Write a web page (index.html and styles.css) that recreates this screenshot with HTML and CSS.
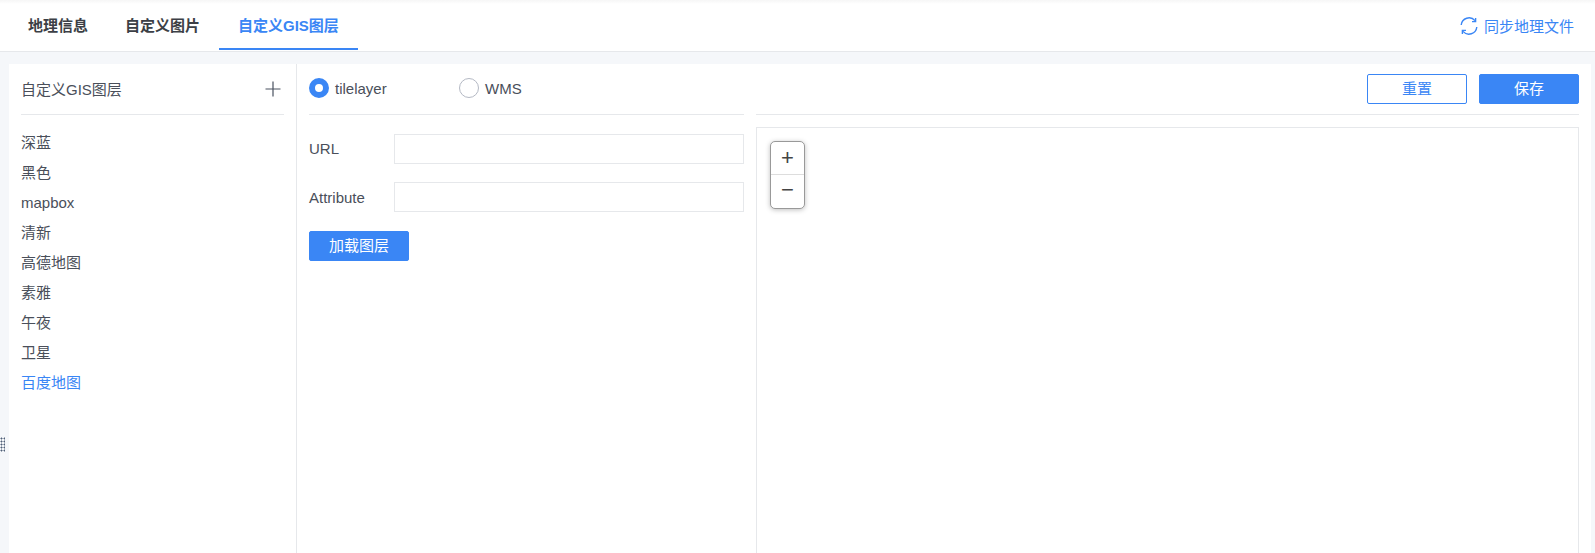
FILE: index.html
```html
<!DOCTYPE html>
<html lang="en">
<head>
  <meta charset="UTF-8">
  <title>地理信息</title>
  <link rel="stylesheet" href="styles.css">
</head>
<body>
  <div class="topbar">
    <div class="tabs">
      <div class="tab">地理信息</div>
      <div class="tab">自定义图片</div>
      <div class="tab active">自定义GIS图层</div>
    </div>
    <div class="sync">
      <svg width="18" height="18" viewBox="0 0 18 18" fill="none" stroke="#3a86f5" stroke-width="1.4">
        <path d="M1.2 8A7.9 7.9 0 0 1 15 3.6"/>
        <path d="M15.6 1v3.6H12"/>
        <path d="M16.8 10A7.9 7.9 0 0 1 3 14.4"/>
        <path d="M2.4 17v-3.6H6"/>
      </svg>
      <span>同步地理文件</span>
    </div>
  </div>

  <div class="grip"></div>

  <div class="panel">
    <div class="sidebar">
      <div class="side-head">
        <span>自定义GIS图层</span>
        <svg width="16" height="16" viewBox="0 0 16 16" stroke="#4a5260" stroke-width="1.2">
          <path d="M8 0.5v15M0.5 8h15"/>
        </svg>
      </div>
      <ul class="layer-list">
        <li>深蓝</li>
        <li>黑色</li>
        <li>mapbox</li>
        <li>清新</li>
        <li>高德地图</li>
        <li>素雅</li>
        <li>午夜</li>
        <li>卫星</li>
        <li class="selected">百度地图</li>
      </ul>
    </div>

    <div class="content">
      <div class="form-col">
        <div class="radios">
          <label class="radio checked"><i></i>tilelayer</label>
          <label class="radio"><i></i>WMS</label>
        </div>
        <div class="field">
          <label class="url-label">URL</label>
          <input type="text">
        </div>
        <div class="field">
          <label>Attribute</label>
          <input type="text">
        </div>
        <button class="btn primary load">加载图层</button>
      </div>

      <div class="map-col">
        <div class="actions">
          <button class="btn outline">重置</button>
          <button class="btn primary">保存</button>
        </div>
        <div class="map">
          <div class="zoom-ctl">
            <div class="zoom-btn">+</div>
            <div class="zoom-btn minus">−</div>
          </div>
        </div>
      </div>
    </div>
  </div>
</body>
</html>
```

FILE: styles.css
```css
* {
  box-sizing: border-box;
}

html, body {
  height: 100%;
}

body {
  margin: 0;
  height: 553px;
  overflow: hidden;
  background: #f5f7fa;
  color: #4a4f5a;
  font-family: "Liberation Sans", "Noto Sans CJK SC", sans-serif;
  font-size: 15px;
  display: flex;
  flex-direction: column;
  position: relative;
}

.topbar {
  height: 52px;
  flex: none;
  background: linear-gradient(#f6f6f6, #fff 4px);
  border-bottom: 1px solid #e6e8eb;
  display: flex;
  justify-content: space-between;
  padding: 0 21px 0 9px;
}

.tabs {
  display: flex;
}

.tab {
  height: 50px;
  padding: 0 19px;
  margin-right: -1px;
  line-height: 52px;
  font-weight: bold;
  color: #3c3f46;
}

.tab.active {
  color: #3a86f5;
  border-bottom: 2px solid #3a86f5;
  margin-left: 1px;
  margin-right: 0;
}

.sync {
  display: flex;
  align-items: center;
  gap: 6px;
  color: #3a86f5;
  height: 51px;
}

.grip {
  position: absolute;
  left: 0;
  top: 437px;
  width: 5px;
  height: 15px;
  background-image: radial-gradient(#4f5f78 0.9px, transparent 1.1px);
  background-size: 3px 3px;
}

.panel {
  flex: 1;
  margin: 12px 4px 0 9px;
  background: #fff;
  display: flex;
  min-height: 0;
}

.sidebar {
  width: 288px;
  flex: none;
  border-right: 1px solid #e6e8eb;
  padding: 0 12px;
}

.side-head {
  height: 51px;
  border-bottom: 1px solid #e6e8eb;
  display: flex;
  align-items: center;
  justify-content: space-between;
  padding-right: 3px;
}

.side-head span {
  margin-bottom: 2px;
}

.layer-list {
  list-style: none;
  margin: 13px 0 0;
  padding: 0;
}

.layer-list li {
  height: 30px;
  line-height: 29px;
}

.layer-list li.selected {
  color: #3a86f5;
}

.content {
  flex: 1;
  display: flex;
  padding: 0 12px;
  gap: 12px;
  min-width: 0;
}

.form-col {
  width: 435px;
  flex: none;
}

.radios {
  height: 51px;
  border-bottom: 1px solid #e6e8eb;
  display: flex;
  margin-bottom: 19px;
}

.radio {
  width: 150px;
  display: flex;
  align-items: center;
  gap: 6px;
  line-height: 22px;
}

.radio i {
  width: 20px;
  height: 20px;
  border-radius: 50%;
  border: 1px solid #b4b9c4;
  background: #fff;
  margin-bottom: 2px;
}

.radio.checked i {
  border: 6px solid #3a86f5;
}

.field {
  display: flex;
  align-items: center;
  height: 30px;
  margin-bottom: 18px;
}

.field label {
  width: 85px;
  flex: none;
}

.field .url-label {
  margin-bottom: 2px;
}

.field input {
  flex: 1;
  min-width: 0;
  height: 30px;
  border: 1px solid #e6e8eb;
  background: #fff;
  outline: none;
}

.btn {
  width: 100px;
  height: 30px;
  border-radius: 2px;
  font-family: inherit;
  font-size: 15px;
  padding: 0 0 3px;
}

.btn.load {
  margin-top: 1px;
}

.btn.primary {
  background: #3a86f5;
  border: 1px solid #3a86f5;
  color: #fff;
}

.btn.outline {
  background: #fff;
  border: 1px solid #3a86f5;
  color: #3a86f5;
}

.map-col {
  flex: 1;
  display: flex;
  flex-direction: column;
  min-width: 0;
}

.actions {
  height: 51px;
  flex: none;
  border-bottom: 1px solid #e6e8eb;
  display: flex;
  justify-content: flex-end;
  gap: 12px;
  padding-top: 10px;
  margin-bottom: 12px;
}

.map {
  flex: 1;
  border: 1px solid #e6e8eb;
  border-bottom: none;
  position: relative;
}

.zoom-ctl {
  position: absolute;
  left: 13px;
  top: 13px;
  width: 35px;
  border: 1px solid #999;
  border-radius: 5px;
  box-shadow: 0 1px 5px rgba(0, 0, 0, 0.25);
  background: #fff;
}

.zoom-btn {
  height: 32px;
  text-align: center;
  line-height: 32px;
  font-size: 22px;
  color: #444;
}

.zoom-btn.minus {
  height: 34px;
  border-top: 1px solid #ddd;
  line-height: 29px;
}
```
